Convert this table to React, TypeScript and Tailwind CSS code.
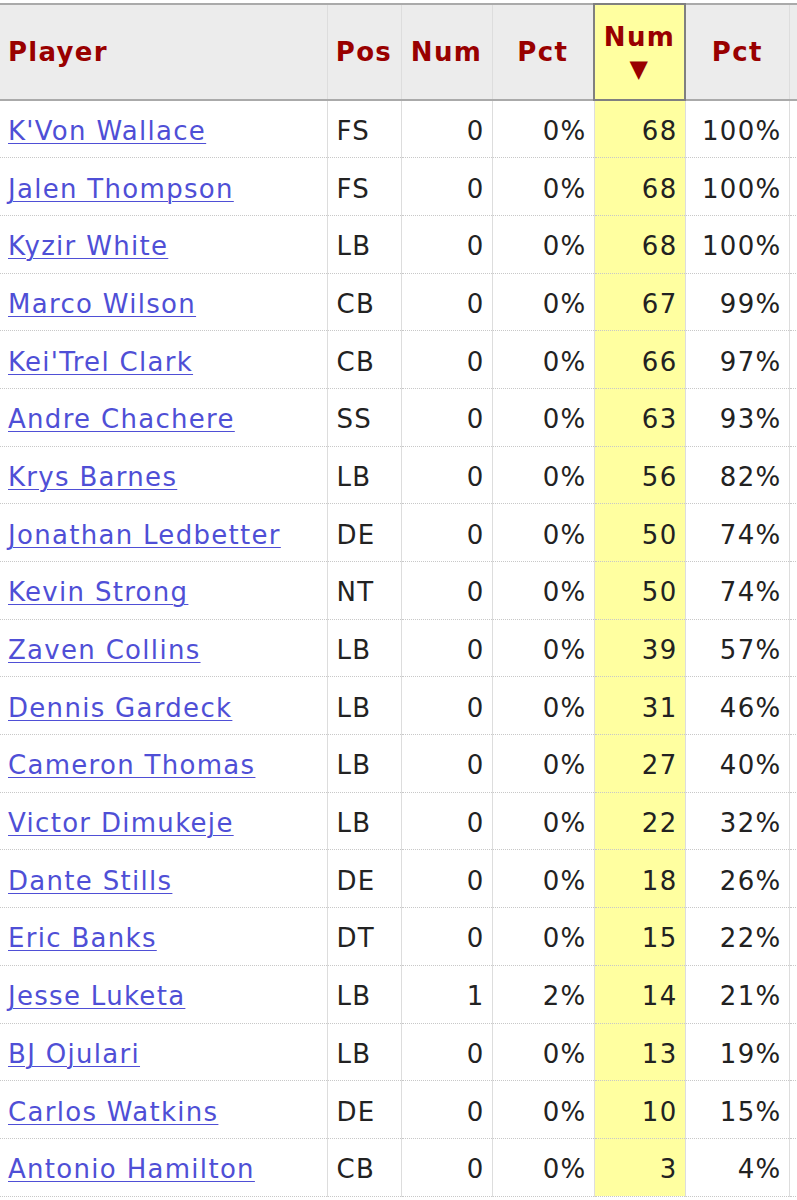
import React from "react";

const rows: [string, string, number, string, number, string][] = [
  ["K'Von Wallace", "FS", 0, "0%", 68, "100%"],
  ["Jalen Thompson", "FS", 0, "0%", 68, "100%"],
  ["Kyzir White", "LB", 0, "0%", 68, "100%"],
  ["Marco Wilson", "CB", 0, "0%", 67, "99%"],
  ["Kei'Trel Clark", "CB", 0, "0%", 66, "97%"],
  ["Andre Chachere", "SS", 0, "0%", 63, "93%"],
  ["Krys Barnes", "LB", 0, "0%", 56, "82%"],
  ["Jonathan Ledbetter", "DE", 0, "0%", 50, "74%"],
  ["Kevin Strong", "NT", 0, "0%", 50, "74%"],
  ["Zaven Collins", "LB", 0, "0%", 39, "57%"],
  ["Dennis Gardeck", "LB", 0, "0%", 31, "46%"],
  ["Cameron Thomas", "LB", 0, "0%", 27, "40%"],
  ["Victor Dimukeje", "LB", 0, "0%", 22, "32%"],
  ["Dante Stills", "DE", 0, "0%", 18, "26%"],
  ["Eric Banks", "DT", 0, "0%", 15, "22%"],
  ["Jesse Luketa", "LB", 1, "2%", 14, "21%"],
  ["BJ Ojulari", "LB", 0, "0%", 13, "19%"],
  ["Carlos Watkins", "DE", 0, "0%", 10, "15%"],
  ["Antonio Hamilton", "CB", 0, "0%", 3, "4%"],
];

const th = "border-x border-solid border-[#dddddd] align-middle font-bold text-[#990000]";
const td = "border-x border-b border-x-[#dddddd] border-b-[#c8c8c8] pt-[4px] align-middle";
const dotted = { borderBottomStyle: "dotted" as const };

export default function App() {
  return (
    <div className="w-[797px] h-[1200px] overflow-hidden bg-white pt-[3px]">
      <table
        className="table-fixed border-collapse text-[26px] leading-none tracking-[1.3px] text-[#222222]"
        style={{ fontFamily: '"DejaVu Sans", Verdana, sans-serif', width: 900 }}
      >
        <colgroup>
          <col className="w-[327px]" />
          <col className="w-[74px]" />
          <col className="w-[91px]" />
          <col className="w-[102px]" />
          <col className="w-[91px]" />
          <col className="w-[104px]" />
          <col className="w-[111px]" />
        </colgroup>
        <thead>
          <tr className="h-[96px] bg-[#ececec] border-t-2 border-b-2 border-[#aaaaaa]">
            <th className={`${th} border-l-0 px-[8px] text-left`}>Player</th>
            <th className={`${th} text-center`}>Pos</th>
            <th className={`${th} text-center`}>Num</th>
            <th className={`${th} text-center`}>Pct</th>
            <th className="border-2 border-solid border-[#808080] bg-[#ffffa0] align-middle font-bold text-[#990000] text-center">
              <div className="leading-[34px]">Num</div>
              <div className="leading-[30px] text-[24px]">▼</div>
            </th>
            <th className={`${th} text-center`}>Pct</th>
            <th className={th}></th>
          </tr>
        </thead>
        <tbody>
          {rows.map(([name, pos, n1, p1, n2, p2]) => (
            <tr key={name} className="h-[57.7px]">
              <td className={`${td} border-l-0 pl-[8px] text-left whitespace-nowrap`} style={dotted}>
                <a href="#" className="text-[#4f4fd6] underline underline-offset-[3px] decoration-1">
                  {name}
                </a>
              </td>
              <td className={`${td} pl-[9px] text-left`} style={dotted}>{pos}</td>
              <td className={`${td} pr-[7px] text-right`} style={dotted}>{n1}</td>
              <td className={`${td} pr-[7px] text-right`} style={dotted}>{p1}</td>
              <td className={`${td} pr-[7px] text-right bg-[#ffffa0]`} style={dotted}>{n2}</td>
              <td className={`${td} pr-[7px] text-right`} style={dotted}>{p2}</td>
              <td className={td} style={dotted}></td>
            </tr>
          ))}
        </tbody>
      </table>
    </div>
  );
}
